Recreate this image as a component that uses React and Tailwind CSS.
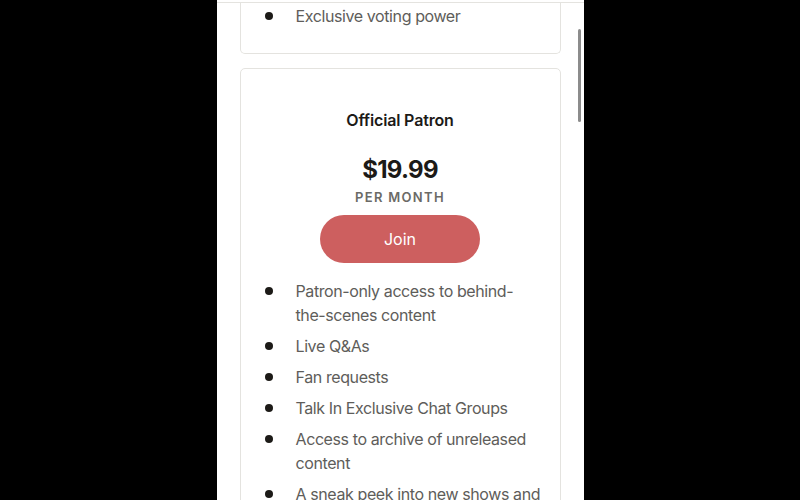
import React from 'react';

const perks = [
    'Patron-only access to behind-the-scenes content',
    'Live Q&As',
    'Fan requests',
    'Talk In Exclusive Chat Groups',
    'Access to archive of unreleased content',
    'A sneak peek into new shows and events',
];

const Perk = ({ text }) => (
    <li className="flex items-start">
        <span className="w-[55px] shrink-0 flex justify-start pl-[24px] pt-[8px]">
            <span className="w-[8px] h-[8px] rounded-full bg-[#1c1a17]" />
        </span>
        <span className="text-[16px] leading-[24px] tracking-[-0.025em] text-[#5e5d5a]">{text}</span>
    </li>
);

export default function App() {
    return (
        <div className="w-[800px] h-[500px] bg-black flex justify-center overflow-hidden" style={{ fontFamily: 'Inter, "Noto Sans", sans-serif' }}>
            <div className="relative w-[367px] h-full bg-white overflow-hidden">
                <div className="h-[3px] border-b border-[#e4e3df]" />

                <div className="px-[23px]">
                    <div className="border border-t-0 border-[#e4e3df] rounded-b-[5px] pt-[1px] pb-[25px]">
                        <ul>
                            <Perk text="Exclusive voting power" />
                        </ul>
                    </div>

                    <div className="mt-[14px] border border-[#e4e3df] rounded-[5px] pt-[40px] pb-[40px]">
                        <h3 className="text-center text-[16px] leading-[22px] font-semibold tracking-[-0.01em] text-[#1c1a17]">Official Patron</h3>
                        <div className="mt-[23px] text-center text-[24px] leading-[32px] font-bold tracking-[-0.03em] text-[#1c1a17]">$19.99</div>
                        <div className="mt-[1px] text-center text-[13px] leading-[20px] font-semibold tracking-[0.1em] text-[#6b6a66]">PER MONTH</div>
                        <div className="mt-[8px] flex justify-center">
                            <button className="w-[160px] h-[48px] rounded-full bg-[#cd5f5f] text-white text-[16px]">Join</button>
                        </div>
                        <ul className="mt-[16px] pr-[17px] flex flex-col gap-[7px]">
                            {perks.map((p) => (
                                <Perk key={p} text={p} />
                            ))}
                        </ul>
                    </div>
                </div>

                <div className="absolute right-[3px] top-[29px] w-[3px] h-[93px] rounded-full bg-[#8c8c8c]" />
            </div>
        </div>
    );
}
